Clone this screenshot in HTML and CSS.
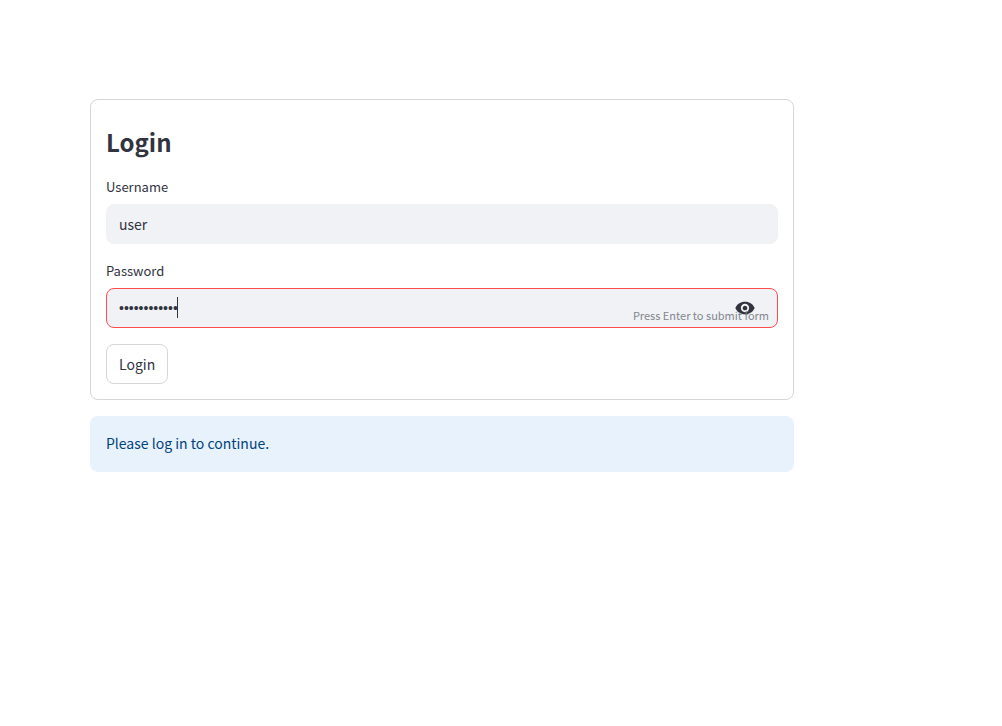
FILE: index.html
```html
<!DOCTYPE html>
<html lang="en">
<head>
<meta charset="utf-8">
<meta name="viewport" content="width=device-width, initial-scale=1">
<title>Login</title>
<link rel="stylesheet" href="styles.css">
</head>
<body>
<main class="page">
  <form class="card">
    <h1 class="title">Login</h1>
    <div class="field">
      <label class="label" for="username">Username</label>
      <div class="control">
        <input class="input" id="username" type="text" value="user">
      </div>
    </div>
    <div class="field">
      <label class="label" for="password">Password</label>
      <div class="control control-active">
        <input class="input input-secret" id="password" type="password" value="abcdefghijkl">
        <span class="caret"></span>
        <button class="reveal" type="button" aria-label="Show password">
          <svg class="eye" viewBox="0 0 24 24" aria-hidden="true"><path d="M12 4.500C6.500 4.500 2.200 7.500 0.400 12c1.800 4.500 6.100 7.500 11.600 7.500s9.800-3 11.600-7.500c-1.800-4.500-6.100-7.500-11.600-7.500zM12 17c-2.760 0-5-2.240-5-5s2.240-5 5-5 5 2.240 5 5-2.240 5-5 5zm0-7.800c-1.550 0-2.800 1.250-2.800 2.800s1.250 2.800 2.800 2.800 2.800-1.250 2.800-2.800-1.250-2.800-2.800-2.800z"/></svg>
        </button>
        <span class="hint">Press Enter to submit form</span>
      </div>
    </div>
    <button class="submit" type="button">Login</button>
  </form>
  <p class="notice">Please log in to continue.</p>
</main>
</body>
</html>
```
FILE: styles.css
```css
* {
  box-sizing: border-box;
}

body {
  margin: 0;
  background: #fff;
  color: #31333f;
  font-family: "Source Sans Pro", "Noto Sans CJK SC", sans-serif;
  font-size: 14px;
  line-height: 24px;
}

.page {
  display: flex;
  flex-direction: column;
  gap: 16px;
  padding: 99px 208px 96px 90px;
}

.card {
  display: flex;
  flex-direction: column;
  gap: 16px;
  padding: 15px;
  border: 1px solid #d6d6d9;
  border-radius: 8px;
}

.title {
  margin: 0;
  padding-top: 9px;
  font-size: 24px;
  font-weight: 700;
  line-height: 36px;
}

.field {
  display: flex;
  flex-direction: column;
  gap: 6px;
}

.label {
  font-size: 13px;
  line-height: 22px;
}

.control {
  position: relative;
  display: flex;
  height: 40px;
  border: 1px solid #f0f2f6;
  border-radius: 8px;
  background: #f0f2f6;
}

.control-active {
  border-color: #ff4b4b;
}

.input {
  flex: 1;
  min-width: 0;
  padding: 0 12px 1px;
  border: 0;
  outline: 0;
  background: transparent;
  color: inherit;
  font: inherit;
}

.input-secret {
  font-family: "Liberation Sans", sans-serif;
}

.caret {
  position: absolute;
  top: 8px;
  left: 70px;
  width: 1px;
  height: 21px;
  background: #31333f;
}

.reveal {
  display: flex;
  align-items: center;
  padding: 0 22px 0 12px;
  border: 0;
  background: transparent;
  color: inherit;
}

.eye {
  width: 20px;
  height: 20px;
  fill: currentColor;
}

.hint {
  position: absolute;
  right: 8px;
  bottom: 4px;
  color: #83858c;
  font-size: 11px;
  line-height: 16px;
  pointer-events: none;
}

.submit {
  align-self: flex-start;
  height: 40px;
  padding: 0 12px 1px;
  border: 1px solid #d6d6d9;
  border-radius: 8px;
  background: #fff;
  color: inherit;
  font: inherit;
}

.notice {
  margin: 0;
  padding: 15px 16px 17px;
  border-radius: 8px;
  background: #e8f2fc;
  color: #004280;
}
```
